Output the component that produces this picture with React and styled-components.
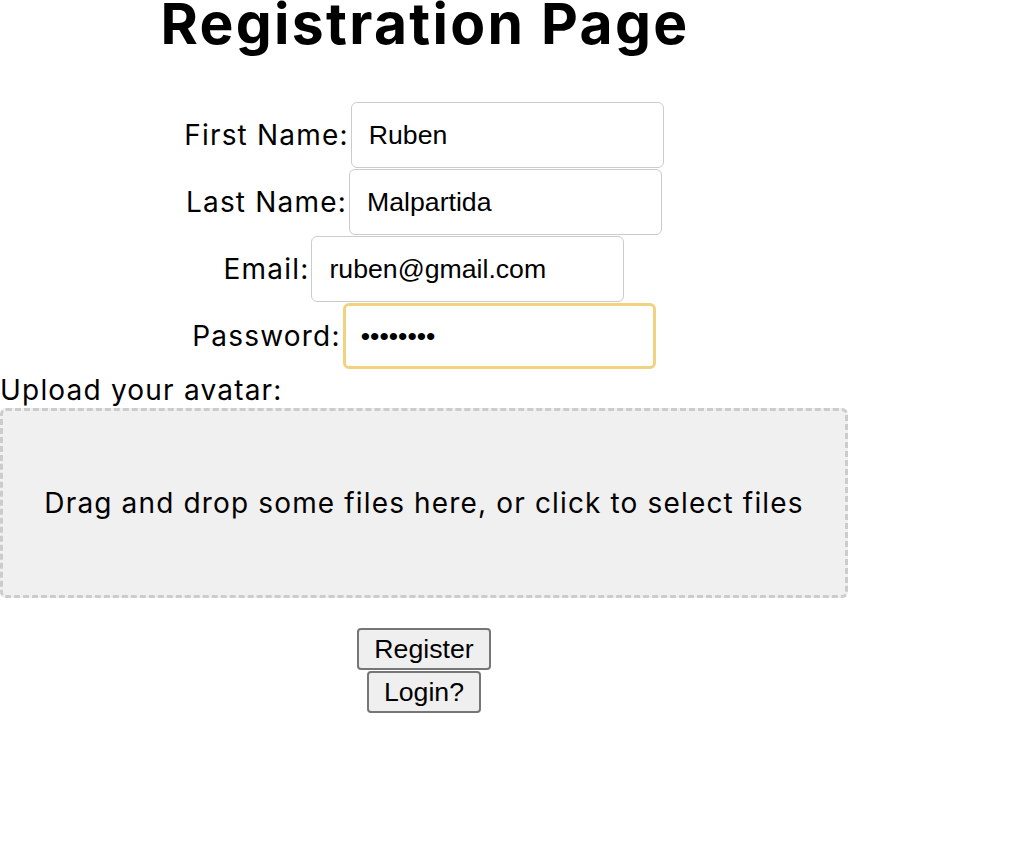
import React from "react";
import styled, { createGlobalStyle } from "styled-components";

const Global = createGlobalStyle`
  html, body { margin: 0; padding: 0; background: #ffffff; }
  body { font-family: Inter, "Noto Sans", sans-serif; color: #000; }
`;

const Page = styled.div`
  width: 848px;
  text-align: center;
`;

const Title = styled.h1`
  margin: 0;
  font-family: Inter, sans-serif;
  font-weight: 700;
  font-size: 57px;
  line-height: 48px;
  letter-spacing: 2.3px;
  padding-left: 2px;
`;

const Form = styled.form`
  display: flex;
  flex-direction: column;
  margin-top: 54px;
`;

const Row = styled.div`
  display: flex;
  justify-content: center;
  align-items: center;
  gap: 2px;
  margin-bottom: 1px;
`;

const Label = styled.label`
  font-family: Inter, sans-serif;
  font-size: 28px;
  line-height: 32px;
  letter-spacing: 1.2px;
`;

const Input = styled.input`
  box-sizing: border-box;
  width: 313px;
  height: 66px;
  padding: 0 0 0 ${(p) => (p.$active ? "15px" : "17px")};
  border: ${(p) => (p.$active ? "3px solid #f1d27e" : "1.5px solid #cccccc")};
  border-radius: 6px;
  font-family: "Liberation Sans", Arial, sans-serif;
  font-size: 26.67px;
  color: #000;
  background: #fff;
  outline: none;
`;

const UploadLabel = styled.div`
  text-align: left;
  font-family: Inter, sans-serif;
  font-size: 28px;
  line-height: 36px;
  letter-spacing: 1.2px;
  margin-top: 2px;
`;

const Dropzone = styled.div`
  box-sizing: border-box;
  height: 190px;
  display: flex;
  align-items: center;
  justify-content: center;
  background: #f0f0f0;
  border: 3px dashed #cccccc;
  border-radius: 6px;
  font-family: Inter, sans-serif;
  font-size: 28px;
  letter-spacing: 1.15px;
`;

const Buttons = styled.div`
  display: flex;
  flex-direction: column;
  align-items: center;
  margin-top: 30px;
`;

const Button = styled.button`
  box-sizing: border-box;
  height: 42px;
  padding: 0 15px;
  margin-bottom: 1px;
  font-family: "Liberation Sans", Arial, sans-serif;
  font-size: 26.67px;
  color: #000;
  background: #efefef;
  border: 2px solid #767676;
  border-radius: 4px;
`;

export default function App() {
  return (
    <>
      <Global />
      <Page>
        <Title>Registration Page</Title>
        <Form onSubmit={(e) => e.preventDefault()}>
          <Row>
            <Label>First Name:</Label>
            <Input type="text" defaultValue="Ruben" />
          </Row>
          <Row>
            <Label>Last Name:</Label>
            <Input type="text" defaultValue="Malpartida" />
          </Row>
          <Row>
            <Label>Email:</Label>
            <Input type="email" defaultValue="ruben@gmail.com" />
          </Row>
          <Row>
            <Label>Password:</Label>
            <Input type="password" defaultValue="12345678" $active />
          </Row>
          <UploadLabel>Upload your avatar:</UploadLabel>
          <Dropzone>Drag and drop some files here, or click to select files</Dropzone>
          <Buttons>
            <Button type="submit">Register</Button>
            <Button type="button">Login?</Button>
          </Buttons>
        </Form>
      </Page>
    </>
  );
}
